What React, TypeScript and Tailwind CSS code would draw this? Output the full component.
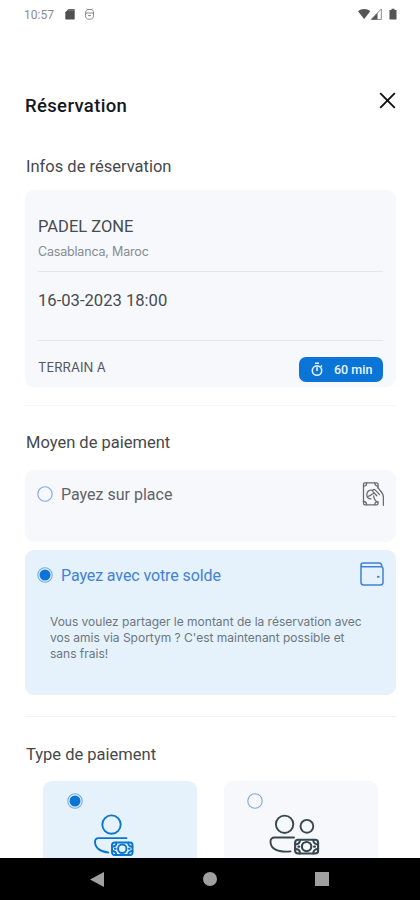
import type { ReactNode } from "react";

function StatusBar() {
  return (
    <div className="flex h-7 items-center justify-between pl-6 pr-[23px]">
      <div className="flex items-center">
        <span className="w-[41px] pt-px text-[12px] leading-7 text-[#8b8b8b]">10:57</span>
        <svg className="h-3 w-2.5" viewBox="0 0 10 12" aria-hidden>
          <path d="M3.5 1h5.2c.6 0 1 .4 1 1v8.600c0 .6-.4 1-1 1H1.300c-.6 0-1-.4-1-1V4.300z" fill="#505050" />
          <path d="M4 1.200v2M6 1.200v2M8 1.200v2" stroke="#999" strokeWidth="0.8" />
        </svg>
        <svg className="ml-[9px] h-3 w-[11px]" viewBox="0 0 11 12" fill="none" stroke="#8a8a8a" aria-hidden>
          <path d="M1.500 5h8v2.800c0 2-1.300 3.400-3 3.400h-2c-1.700 0-3-1.400-3-3.400zM1.500 5c0-2 1-3.500 2.500-3.500h3C8.500 1.500 9.500 3 9.500 5M2.500.6l1 1M8.500.6l-1 1M4 7.600h3" />
        </svg>
      </div>
      <svg className="h-3 w-[39px]" viewBox="0 0 39 12" aria-hidden>
        <path d="M0 3.300C3.500.3 8.800.3 12.300 3.300L6.200 11z" fill="#555" />
        <path d="M23.300 1v10.400H13.200z" fill="none" stroke="#8a8a8a" />
        <path d="M19.500 5v6.500h-6.300z" fill="#555" />
        <path d="M31.500 2h2V.8h3V2h2v9.600h-7z" fill="#555" />
      </svg>
    </div>
  );
}

function Radio({ checked = false }: { checked?: boolean }) {
  return (
    <svg className="size-4 shrink-0" viewBox="0 0 16 16" aria-hidden>
      <circle cx="8" cy="8" r="7.200" fill="none" stroke={checked ? "#75abe6" : "#7fa5e8"} strokeWidth="1.100" />
      {checked && <circle cx="8" cy="8" r="5.500" fill="#0b75d7" />}
    </svg>
  );
}

function StopwatchIcon() {
  return (
    <svg className="h-[15px] w-[13px]" viewBox="0 0 13 15" fill="none" stroke="#e3f0fc" strokeWidth="1.600" aria-hidden>
      <circle cx="6" cy="8.600" r="4.700" />
      <path d="M4 1.200h4M6 5.300v3.800M9.700 4.700l1.200-1.200" />
    </svg>
  );
}

function CashHandIcon() {
  return (
    <svg className="h-6 w-[22px]" viewBox="0 0 22 24" fill="none" stroke="#686c70" strokeWidth="1.300" strokeLinejoin="round" strokeLinecap="round" aria-hidden>
      <path d="M16 6V2.200c0-.8-.5-1.300-1.300-1.300H2.800C2 .9 1.500 1.400 1.500 2.200v19.300c0 .8.5 1.300 1.300 1.300h11.900c.8 0 1.300-.5 1.300-1.300v-1.800" />
      <path d="M1.500 4.200C3.300 4.200 4.600 2.800 4.600 1M12.700 1c0 1.800 1.500 3.200 3.300 3.200M1.500 19.500c1.800 0 3.100 1.400 3.100 3.200M12.700 22.700c0-1.400.8-2.500 2-3" />
      <path d="M16 5.800l3.400 4.200c1.300 1.600 2 3.500 2 5.500v7.800" />
      <path d="M14.800 13.800l-3.600-3.900c-.7-.8-.7-1.600-.1-2.200.6-.5 1.400-.4 2 .2l4.500 4.700M10.500 8.400C7.800 7.400 4.800 9.300 4.800 12.500c0 2.600 1.900 4.300 4.200 4.300" />
      <path d="M6.500 14.200c2.300-.1 2.600-2.300 5-2.600M11.700 13.800c.1 2.900 1.400 5.100 4.200 6.700" />
    </svg>
  );
}

function WalletIcon() {
  return (
    <svg className="h-6 w-6" viewBox="0 0 24 24" fill="none" stroke="#3f82d8" strokeWidth="1.500" aria-hidden>
      <path d="M1 3v17.200c0 1.700 1.100 2.800 2.800 2.800h16.400c1.700 0 2.800-1.100 2.800-2.800V7c0-1.300-.9-2.200-2.200-2.200H3C1.700 4.800 1 4.100 1 3s.9-2 2-2h16c1.700 0 2.900 1.500 2.900 4" />
      <path d="M17 14.800h2.500" strokeWidth="1.800" />
    </svg>
  );
}

function Banknote() {
  return (
    <>
      <rect x="1" y="1" width="20.500" height="12.500" rx="2.500" />
      <circle cx="11.250" cy="7.250" r="4.200" />
      <path d="M1 5.300c2.500 0 4.300-1.500 4.300-4M17.200 1.300c0 2.500 1.800 4 4.300 4M1 9.500c2.500 0 4.300 1.500 4.300 4M17.200 13.500c0-2.500 1.800-4 4.300-4M3.900 7.300h.8M17.900 7.300h.8" />
    </>
  );
}

function OnePayerIcon() {
  return (
    <svg className="h-[44px] w-[42px]" viewBox="0 0 42 44" fill="none" stroke="#0b75d0" strokeWidth="1.900" strokeLinecap="round" aria-hidden>
      <circle cx="18.500" cy="10.600" r="9.200" />
      <path d="M33.500 24.100H5.500c-2.300 0-3.500 1.400-3.500 3.700 0 5.700 4.800 10.200 13.200 10.700" />
      <g transform="translate(18 27.500)">
        <Banknote />
      </g>
    </svg>
  );
}

function TwoPayersIcon() {
  return (
    <svg className="h-[44px] w-[52px]" viewBox="0 0 52 44" fill="none" stroke="#37474f" strokeWidth="1.900" strokeLinecap="round" aria-hidden>
      <circle cx="16.600" cy="10.300" r="8.700" />
      <circle cx="38.900" cy="12.300" r="6.400" />
      <path d="M26 23.500H6.500c-2.600 0-4 1.600-4 3.900 0 6.600 5.800 11.300 20 10" />
      <g transform="translate(26 24.600) scale(1.120 1.100)">
        <Banknote />
      </g>
    </svg>
  );
}

function SectionTitle({ children }: { children: ReactNode }) {
  return <h2 className="pl-px text-[16.5px] leading-6 text-[#46484c]">{children}</h2>;
}

export default function App() {
  return (
    <div className="flex h-[900px] w-[420px] flex-col overflow-hidden bg-white font-['Roboto',sans-serif]">
      <div className="h-[858px] shrink-0 overflow-hidden">
        <StatusBar />

        <header className="flex items-start justify-between pl-[25px] pr-6 pt-16">
          <h1 className="mt-0.5 text-[18.500px] font-medium leading-6 tracking-[0.350px] text-[#15171f]">Réservation</h1>
          <button aria-label="Fermer" className="flex size-[17px]">
            <svg viewBox="0 0 17 17" stroke="#111" strokeWidth="1.900" aria-hidden>
              <path d="M1.200 1.200l14.600 14.600M15.800 1.200L1.200 15.800" />
            </svg>
          </button>
        </header>

        <main className="pl-[25px] pr-6">
          <section className="pt-[37px]">
            <SectionTitle>Infos de réservation</SectionTitle>
            <div className="mt-[11px] h-[197px] rounded-[9px] bg-[#f6f8fc] px-[13px] pt-[25px]">
              <p className="text-[16.500px] leading-6 text-[#484b50]">PADEL ZONE</p>
              <p className="mt-px font-['Inter',sans-serif] text-[12.500px] leading-6 tracking-[-0.18px] text-[#858b91]">
                Casablanca, Maroc
              </p>
              <div className="mt-[7px] h-px bg-[#e3e6eb]" />
              <p className="mt-[17px] text-[16.600px] leading-6 text-[#484b50]">16-03-2023 18:00</p>
              <div className="mt-[27px] h-px bg-[#e3e6eb]" />
              <div className="flex items-start justify-between pt-4">
                <span className="font-['Inter',sans-serif] text-[13px] leading-5 text-[#53575c]">TERRAIN A</span>
                <span className="flex h-[25px] w-[84px] items-center rounded-[7px] bg-[#0b75d7] pl-3 text-[12.500px] font-medium text-[#e9f4ff]">
                  <StopwatchIcon />
                  <span className="ml-[10px] mt-0.5 whitespace-nowrap">60 min</span>
                </span>
              </div>
            </div>
          </section>

          <div className="mt-[18px] h-px bg-[#f6f6f7]" />

          <section className="pt-[25px]">
            <SectionTitle>Moyen de paiement</SectionTitle>
            <div className="mt-[15px] flex h-[72px] items-start rounded-[9px] bg-[#f6f8fc] pl-3 pr-3 pt-3">
              <div className="mt-1">
                <Radio />
              </div>
              <span className="ml-2 mt-px flex-1 text-[16px] leading-6 text-[#606369]">Payez sur place</span>
              <CashHandIcon />
            </div>
            <div className="mt-2 h-[145px] rounded-[9px] bg-[#e5f1fb] pl-3 pr-3 pt-3">
              <div className="flex items-start">
                <div className="mt-[5px]">
                  <Radio checked />
                </div>
                <span className="ml-2 mt-0.5 flex-1 text-[16px] leading-6 tracking-[-0.1px] text-[#3f82d8]">
                  Payez avec votre solde
                </span>
                <WalletIcon />
              </div>
              <p className="ml-[13px] mt-[26px] whitespace-nowrap font-['Inter',sans-serif] text-[12px] leading-4 tracking-[-0.01px] text-[#6d767d]">
                Vous voulez partager le montant de la réservation avec
                <br />
                vos amis via Sportym ? C'est maintenant possible et
                <br />
                sans frais!
              </p>
            </div>
          </section>

          <div className="mt-[21px] h-px bg-[#f2f2f3]" />

          <section className="pt-[26px]">
            <SectionTitle>Type de paiement</SectionTitle>
            <div className="mt-[14px] flex gap-[27px] pl-[18px]">
              <div className="h-[120px] w-[154px] rounded-[9px] bg-[#e5f1fb] pt-3">
                <div className="ml-6">
                  <Radio checked />
                </div>
                <div className="ml-[50px] mt-[5px]">
                  <OnePayerIcon />
                </div>
              </div>
              <div className="h-[120px] w-[154px] rounded-[9px] bg-[#f6f8fc] pt-3">
                <div className="ml-[23px]">
                  <Radio />
                </div>
                <div className="ml-[44px] mt-[5px]">
                  <TwoPayersIcon />
                </div>
              </div>
            </div>
          </section>
        </main>
      </div>

      <nav className="flex flex-1 items-center justify-between bg-black pl-[90px] pr-[91px]">
        <svg className="h-[15px] w-[14px]" viewBox="0 0 14 15" aria-hidden>
          <path d="M0 7.500 14 0v15z" fill="#a0a0a0" />
        </svg>
        <span className="size-[14px] rounded-full bg-[#a0a0a0]" />
        <span className="size-[14px] bg-[#a0a0a0]" />
      </nav>
    </div>
  );
}
